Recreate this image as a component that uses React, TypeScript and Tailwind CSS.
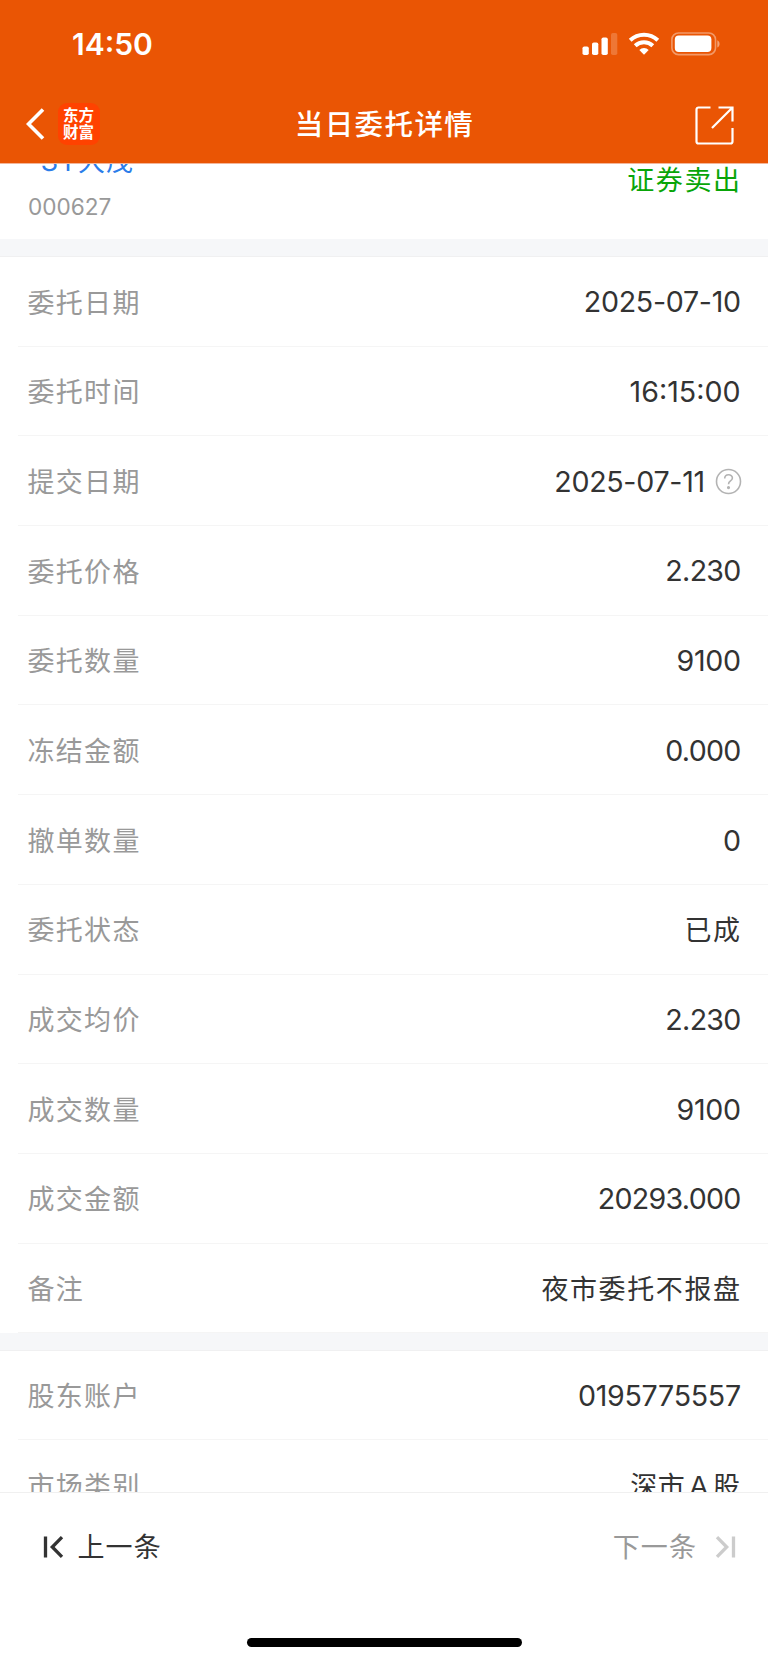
import type { FC, ReactNode } from "react";

type Detail = {
  label: string;
  value: string;
  help?: boolean;
};

const orderDetails: Detail[] = [
  { label: "委托日期", value: "2025-07-10" },
  { label: "委托时间", value: "16:15:00" },
  { label: "提交日期", value: "2025-07-11", help: true },
  { label: "委托价格", value: "2.230" },
  { label: "委托数量", value: "9100" },
  { label: "冻结金额", value: "0.000" },
  { label: "撤单数量", value: "0" },
  { label: "委托状态", value: "已成" },
  { label: "成交均价", value: "2.230" },
  { label: "成交数量", value: "9100" },
  { label: "成交金额", value: "20293.000" },
  { label: "备注", value: "夜市委托不报盘" },
];

const accountDetails: Detail[] = [
  { label: "股东账户", value: "0195775557" },
  { label: "市场类别", value: "深市Ａ股" },
];

const valueClass = (value: string) => {
  if (/^\d+\.\d+$/.test(value)) return "pt-[3px] text-[28.6px] -mr-[0.7px] tracking-[-0.7px]";
  if (value.includes(":")) return "pt-[3px] text-[28.6px] -mr-[0.5px]";
  if (/^[\d-]+$/.test(value)) return "pt-[3px] text-[28.6px] -mr-[0.8px] tracking-[-0.3px]";
  if (value.includes("Ａ")) return "pt-[5px] text-[27px] -mr-[0.6px] tracking-[0.6px]";
  return "pt-[5px] text-[27px] -mr-[1.6px] tracking-[1.6px]";
};

const StatusBar: FC = () => {
  return (
    <div className="flex h-[88px] items-center justify-between pl-[72px] pr-[47.5px]">
      <p className="text-[30px] font-semibold leading-none">14:50</p>
      <div className="flex items-center">
        <svg width="36" height="24" viewBox="0 0 36 24" fill="currentColor">
          <rect x="0.5" y="14.5" width="6.3" height="8.5" rx="1.8" />
          <rect x="10" y="10.5" width="6.3" height="12.5" rx="1.8" />
          <rect x="19.5" y="5.5" width="6.3" height="17.5" rx="1.8" />
          <rect x="29" y="1" width="6.3" height="22" rx="1.8" opacity="0.2" />
        </svg>
        <svg className="ml-[10px]" width="32" height="24" viewBox="0 0 32 24" fill="none" stroke="currentColor" strokeWidth="4">
          <path d="M2.2 8.3a20 20 0 0 1 27.6 0" />
          <path d="M7.2 13.7a12.7 12.7 0 0 1 17.6 0" />
          <path d="M11.3 18a6.7 6.7 0 0 1 9.4 0L16 22.7z" fill="currentColor" stroke="none" />
        </svg>
        <svg className="ml-[11px]" width="50" height="24" viewBox="0 0 50 24" fill="none">
          <rect x="0.9" y="1" width="43.6" height="21.6" rx="6.6" stroke="currentColor" strokeWidth="1.6" opacity="0.4" />
          <rect x="3.8" y="3.6" width="36.6" height="16.4" rx="4" fill="#ffffff" />
          <path d="M46.3 8.2c3 1.3 3 6 0 7.4z" fill="currentColor" opacity="0.45" />
        </svg>
      </div>
    </div>
  );
};

const Header: FC = () => {
  return (
    <header className="h-[164px] shrink-0 border-b border-[#f3b69a] bg-[#ea5504] text-white">
      <StatusBar />
      <nav className="grid h-[74px] grid-cols-3 items-center pl-[26px] pr-[34px]">
        <div className="mb-[2px] flex items-center">
          <svg width="19" height="32" viewBox="0 0 19 32" fill="none" stroke="currentColor" strokeWidth="3.6">
            <path d="M17 1.5 2.5 16 17 30.5" />
          </svg>
          <div className="ml-[12.5px] flex h-[42px] w-[42px] flex-col items-center justify-center rounded-[9px] bg-[#ff4200] text-[15.5px] font-bold leading-[17.5px]">
            <span>东方</span>
            <span>财富</span>
          </div>
        </div>
        <h1 className="ml-[9px] whitespace-nowrap text-center text-[28.5px] font-medium leading-none tracking-[1.4px]">
          当日委托详情
        </h1>
        <svg className="justify-self-end" width="39" height="39" viewBox="0 0 39 39" fill="none" stroke="currentColor" strokeWidth="2.2">
          <path d="M15.5 1.5H3.5a2 2 0 0 0-2 2v32a2 2 0 0 0 2 2h32a2 2 0 0 0 2-2V22" />
          <path d="M23.5 1.5h14v14M37 2 17 22" />
        </svg>
      </nav>
    </header>
  );
};

const HelpIcon: FC = () => {
  return (
    <svg className="-mr-[2px] ml-[11px] mt-[1px]" width="27" height="27" viewBox="0 0 27 27" fill="none" stroke="#b3b3b3" strokeWidth="1.6">
      <circle cx="13.5" cy="13.5" r="12" />
      <path d="M9.7 10.6c0-5 7.7-5 7.7-.6 0 3-3.9 3-3.9 6.2" />
      <circle cx="13.5" cy="19.6" r="0.8" fill="#b3b3b3" />
    </svg>
  );
};

const DetailRow: FC<{ detail: Detail }> = ({ detail }) => {
  return (
    <li className="ml-[18px] flex h-[89.7px] items-center justify-between border-b border-[#f5f5f5] pl-[9.5px] pr-[28px]">
      <span className="pt-[5px] text-[27px] tracking-[1.3px] text-[#999999]">{detail.label}</span>
      <span className="flex items-center text-[#333333]">
        <span className={valueClass(detail.value)}>{detail.value}</span>
        {detail.help && <HelpIcon />}
      </span>
    </li>
  );
};

const Card: FC<{ children: ReactNode }> = ({ children }) => {
  return <ul className="shrink-0 bg-white">{children}</ul>;
};

const Footer: FC = () => {
  return (
    <footer className="flex h-[170px] shrink-0 flex-col justify-between border-t border-[#f0f0f0] bg-white">
      <div className="flex h-[108px] items-center justify-between pl-[43px] pr-[32px] text-[27px] tracking-[1.1px]">
        <span className="flex items-center text-[#333333]">
          <svg width="21" height="22" viewBox="0 0 21 22" fill="none" stroke="currentColor" strokeWidth="3.3">
            <path d="M2.5 0.5v21M19 1.2 9.3 11l9.7 9.8" />
          </svg>
          <span className="ml-[13.5px] pt-[2px]">上一条</span>
        </span>
        <span className="flex items-center text-[#999999]">
          <span className="pt-[2px]">下一条</span>
          <svg className="ml-[18px]" width="21" height="22" viewBox="0 0 21 22" fill="none" stroke="#cccccc" strokeWidth="3.3">
            <path d="M18.5 0.5v21M2 1.2l9.7 9.8L2 20.8" />
          </svg>
        </span>
      </div>
      <div className="mb-[15px] h-[9px] w-[275px] self-center rounded-full bg-black" />
    </footer>
  );
};

export default function App() {
  return (
    <div className="flex h-[1662px] w-[768px] flex-col overflow-hidden bg-[#f6f7f9] font-['Inter','Noto_Sans_CJK_SC',sans-serif]">
      <Header />
      <main className="flex min-h-0 flex-1 flex-col overflow-hidden">
        <section className="-mt-[26px] flex h-[101px] shrink-0 justify-between bg-white px-[28px]">
          <div>
            <p className="-ml-[2px] pt-[4px] text-[27px] leading-[40px] tracking-[1.2px] text-[#2b7de9]">*ST大茂</p>
            <p className="mt-[11px] text-[22.6px] leading-[28px] text-[#999999]">000627</p>
          </div>
          <p className="-mr-[1.6px] mt-[23px] text-[27px] leading-[40px] tracking-[1.6px] text-[#08a508]">证券卖出</p>
        </section>
        <div className="h-[18px] shrink-0 border-b border-[#f0f0f1]" />
        <Card>
          {orderDetails.map((detail) => (
            <DetailRow key={detail.label} detail={detail} />
          ))}
        </Card>
        <div className="h-[17.4px] shrink-0 border-b border-[#f0f0f1]" />
        <Card>
          {accountDetails.map((detail) => (
            <DetailRow key={detail.label} detail={detail} />
          ))}
        </Card>
      </main>
      <Footer />
    </div>
  );
}
